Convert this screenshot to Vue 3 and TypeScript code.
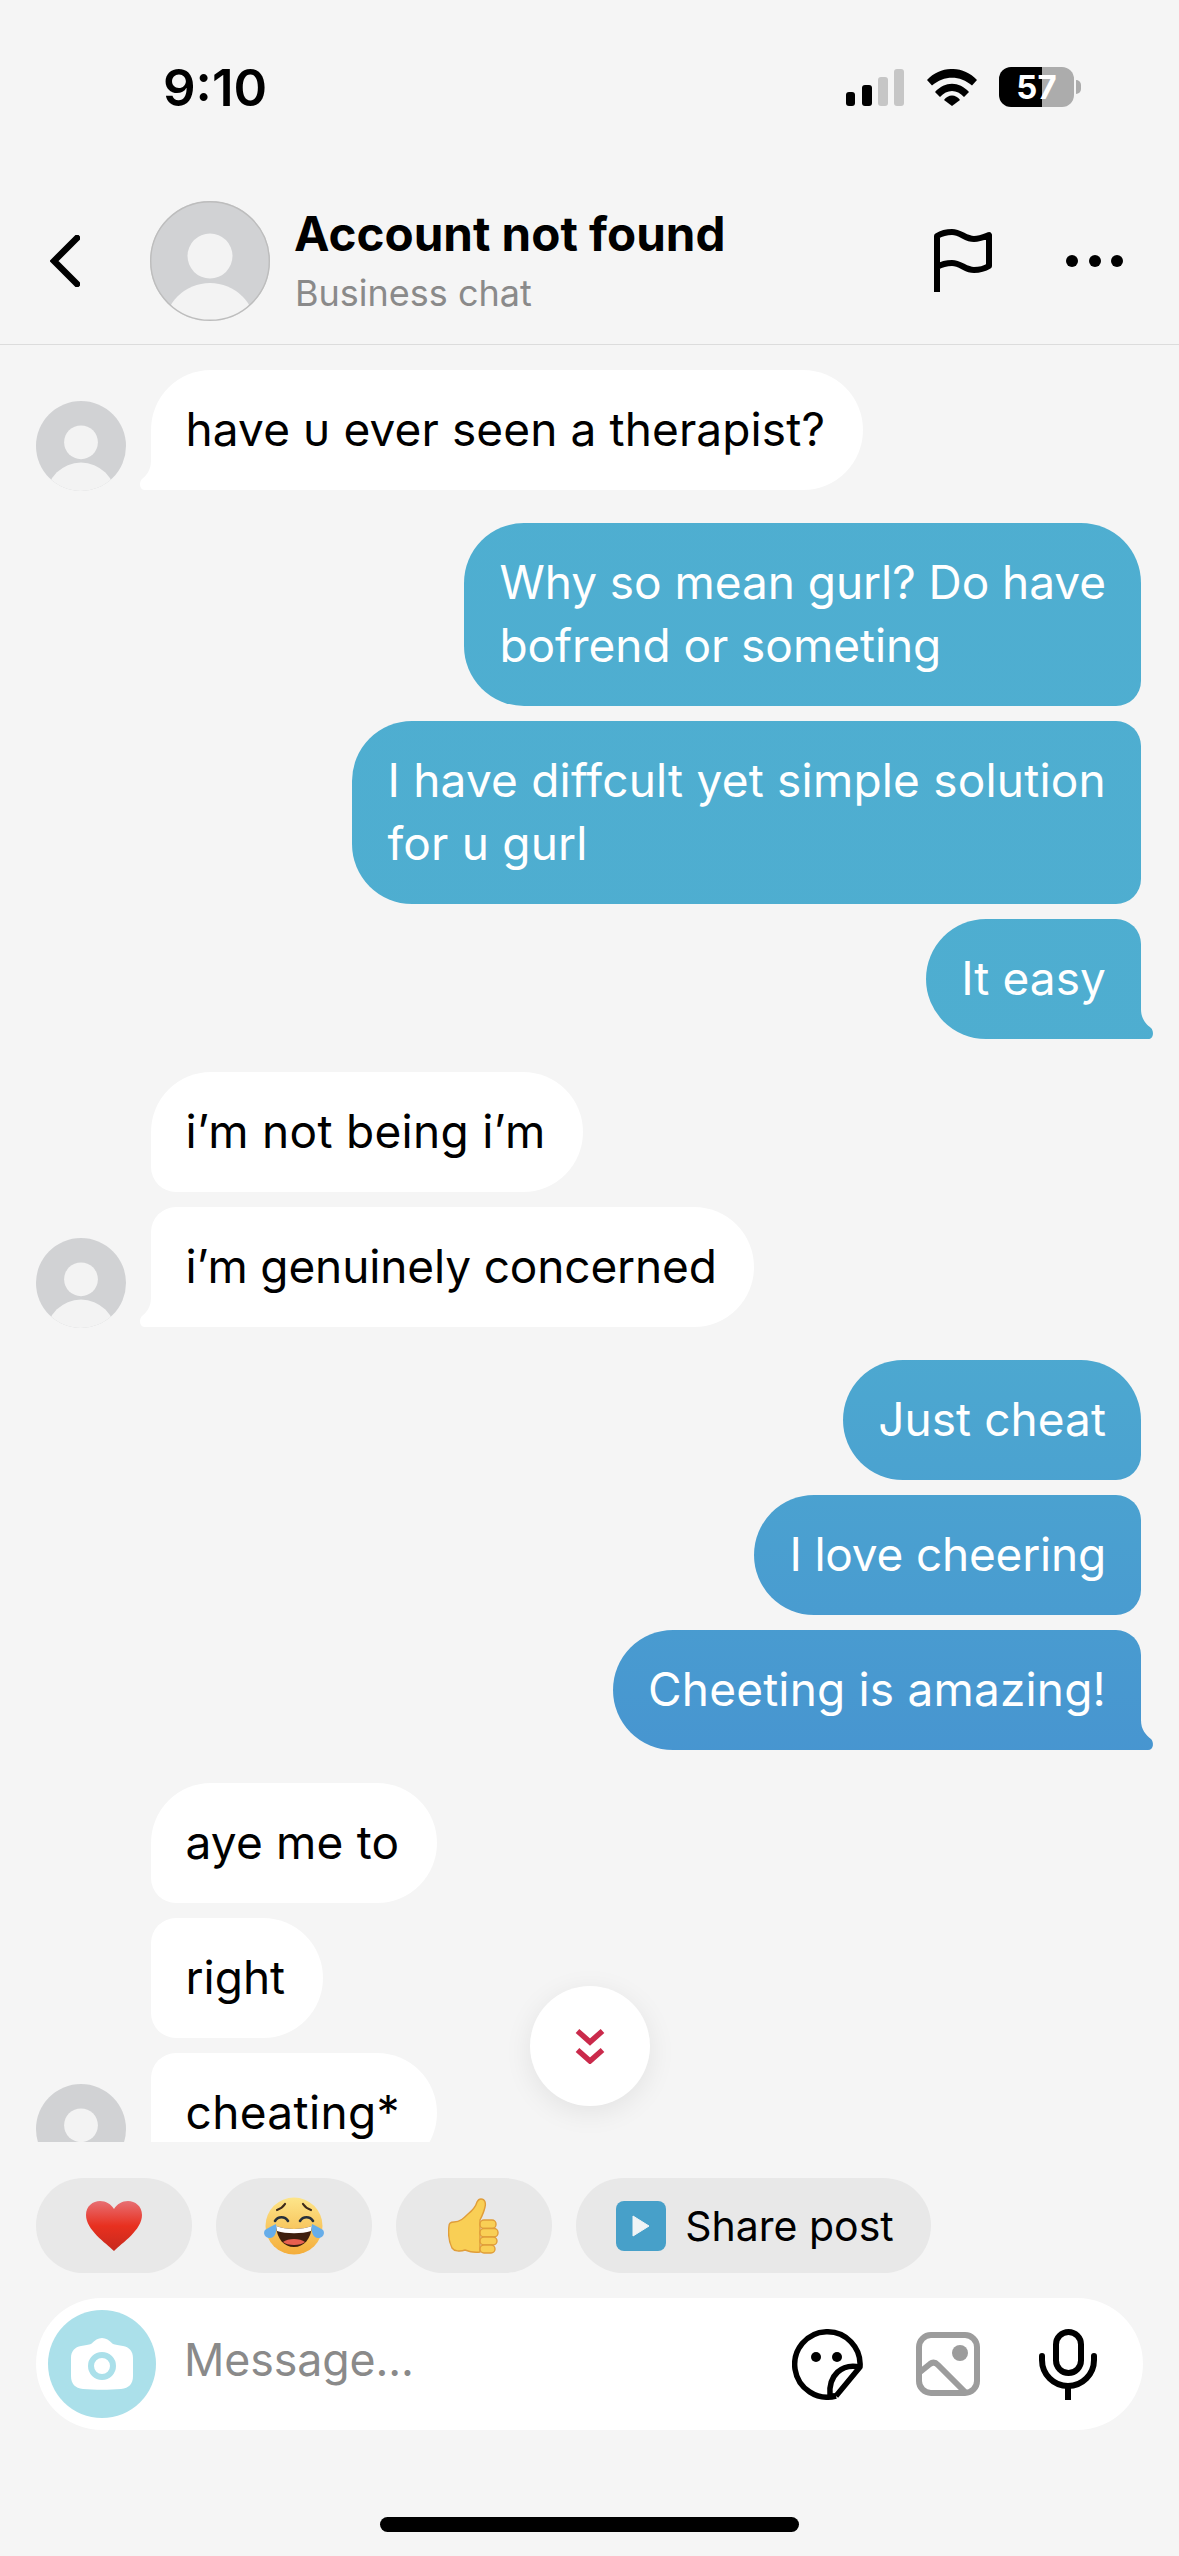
<script setup lang="ts">
interface IMessage {
  text: string;
  spacing: number;
}
interface IGroup {
  side: 'left' | 'right';
  messages: IMessage[];
}

const groups: IGroup[] = [
  { side: 'left', messages: [{ text: 'have υ ever seen a therapist?', spacing: 0.11 }] },
  {
    side: 'right',
    messages: [
      { text: 'Why so mean gurl? Do have\nbofrend or someting', spacing: -0.05 },
      { text: 'I have diffcult yet simple solution\nfor u gurl', spacing: 0.2 },
      { text: 'It easy', spacing: 0.08 },
    ],
  },
  {
    side: 'left',
    messages: [
      { text: 'i’m not being i’m', spacing: 0.29 },
      { text: 'i’m genuinely concerned', spacing: -0.14 },
    ],
  },
  {
    side: 'right',
    messages: [
      { text: 'Just cheat', spacing: 0.04 },
      { text: 'I love cheering', spacing: -0.2 },
      { text: 'Cheeting is amazing!', spacing: 0.18 },
    ],
  },
  {
    side: 'left',
    messages: [
      { text: 'aye me to', spacing: 0.18 },
      { text: 'right', spacing: 0 },
      { text: 'cheating*', spacing: 0.36 },
    ],
  },
];
</script>

<template>
  <div class="page">
    <div class="status">
      <span class="time">9:10</span>
      <div class="status-icons">
        <svg class="signal" width="58" height="37" viewBox="0 0 58 37">
          <rect x="0" y="23" width="9" height="14" rx="3" fill="#000" />
          <rect x="16" y="16" width="10" height="21" rx="3" fill="#000" />
          <rect x="32" y="8" width="10" height="29" rx="3" fill="#c6c6c6" />
          <rect x="48" y="0" width="10" height="37" rx="3" fill="#c6c6c6" />
        </svg>
        <svg class="wifi" width="50" height="37" viewBox="0 0 50 37">
          <path d="M0 11C14-3.7 36-3.7 50 11L45 16.5C33 6 17 6 5 16.5Z" fill="#000" />
          <path d="M8 23C18 12 32 12 42 23L37 28C30 20 20 20 13 28Z" fill="#000" />
          <path d="M17 31C21 25 29 25 33 31L25 37Z" fill="#000" />
        </svg>
        <div class="battery">57</div>
      </div>
    </div>

    <header class="header">
      <svg class="back" width="30" height="52" viewBox="0 0 30 52">
        <path d="M27 3L4 26L27 49" fill="none" stroke="#000" stroke-width="6.5" stroke-linecap="round" stroke-linejoin="miter" />
      </svg>
      <svg class="head-avatar" width="120" height="120" viewBox="0 0 120 120">
        <defs>
          <clipPath id="avatar-clip"><circle cx="60" cy="60" r="60" /></clipPath>
        </defs>
        <g clip-path="url(#avatar-clip)">
          <rect width="120" height="120" fill="#d1d2d4" />
          <circle cx="60" cy="55" r="22.5" fill="#f3f3f3" />
          <circle cx="60" cy="128" r="46" fill="#f3f3f3" />
        </g>
        <circle cx="60" cy="60" r="59.3" fill="none" stroke="#bdbdbd" stroke-width="1.4" />
      </svg>
      <div class="head-text">
        <div class="title">Account not found</div>
        <div class="subtitle">Business chat</div>
      </div>
      <svg class="flag" width="58" height="63" viewBox="0 0 58 63">
        <path
          d="M3 63V7C8 4 13 3 18 3C27 3 31 10 40 10C46 10 50 8 55 6V37C50 40 46 41 40 41C31 41 27 34 18 34C13 34 8 35 3 38"
          fill="none"
          stroke="#000"
          stroke-width="6"
          stroke-linejoin="round"
        />
      </svg>
      <div class="dots"><i /><i /><i /></div>
    </header>

    <main class="messages">
      <section v-for="(group, g) in groups" :key="g" class="group" :class="group.side">
        <svg v-if="group.side === 'left'" class="avatar" width="90" height="90" viewBox="0 0 120 120">
          <g clip-path="url(#avatar-clip)">
            <rect width="120" height="120" fill="#d1d2d4" />
            <circle cx="60" cy="55" r="22.5" fill="#f3f3f3" />
            <circle cx="60" cy="128" r="46" fill="#f3f3f3" />
          </g>
        </svg>
        <div class="stack">
          <div
            v-for="(message, m) in group.messages"
            :key="m"
            class="bubble"
            :class="{ first: m === 0, tail: m === group.messages.length - 1 && g !== 4 }"
            :style="{ letterSpacing: message.spacing + 'px' }"
          >{{ message.text }}</div>
        </div>
      </section>
    </main>

    <div class="jump">
      <svg width="30" height="36" viewBox="0 0 30 36">
        <path d="M2.5 3L15 14L27.5 3M2.5 22L15 33L27.5 22" fill="none" stroke="#ca2a4b" stroke-width="5.5" />
      </svg>
    </div>

    <div class="chips">
      <div class="chip emoji">
        <svg width="56" height="50" viewBox="0 0 56 50">
          <defs>
            <linearGradient id="heart-fill" x1="0" y1="0" x2="0" y2="1">
              <stop offset="0" stop-color="#e76f73" />
              <stop offset="0.5" stop-color="#e8301f" />
              <stop offset="1" stop-color="#c7291d" />
            </linearGradient>
          </defs>
          <path d="M28 50C20 42 0 29 0 14C0 5 7 0 14 0C20 0 25 3 28 8C31 3 36 0 42 0C49 0 56 5 56 14C56 29 36 42 28 50Z" fill="url(#heart-fill)" />
        </svg>
      </div>
      <div class="chip emoji">
        <svg width="60" height="58" viewBox="0 0 60 58">
          <defs>
            <linearGradient id="face-fill" x1="0" y1="0" x2="0" y2="1">
              <stop offset="0" stop-color="#fde58a" />
              <stop offset="1" stop-color="#f4ad3a" />
            </linearGradient>
          </defs>
          <circle cx="30" cy="29" r="28.5" fill="url(#face-fill)" />
          <path d="M13 13C16 12 19 10 21 7M47 13C44 12 41 10 39 7" fill="none" stroke="#3d2a1a" stroke-width="2.2" stroke-linecap="round" />
          <path d="M11 24C14 19 21 19 24 24M36 24C39 19 46 19 49 24" fill="none" stroke="#27303a" stroke-width="2.6" stroke-linecap="round" />
          <path d="M12 29C22 33 38 33 48 29C47 42 40 50 30 50C20 50 13 42 12 29Z" fill="#3e1f0e" />
          <path d="M12 29C22 33 38 33 48 29L47 34C38 37 22 37 13 34Z" fill="#fff" />
          <path d="M19 45C24 41 36 41 41 45C37 49 23 49 19 45Z" fill="#e8604f" />
          <path d="M12 27C13 33 12 41 6 41C0 41-1 35 1 33C4 31 8 29 12 27Z" fill="#66ade9" />
          <path d="M48 27C47 33 48 41 54 41C60 41 61 35 59 33C56 31 52 29 48 27Z" fill="#66ade9" />
        </svg>
      </div>
      <div class="chip emoji">
        <svg width="52" height="56" viewBox="0 0 52 56">
          <path
            d="M33 1C37 1 38 5 37 9C36 14 34 18 32 22V54C26 55 22 54 17 52C12 54 6 53 4 50C1 44 0 36 1 28C1 25 3 24 6 24C12 24 16 20 20 16C25 12 28 8 29 4C30 2 31 1 33 1Z"
            fill="#f9cf55"
            stroke="#e09d39"
            stroke-width="1.4"
          />
          <g fill="#f9cf55" stroke="#e09d39" stroke-width="1.4">
            <rect x="32" y="22" width="16" height="8.5" rx="4" />
            <rect x="32" y="30.5" width="18" height="8.5" rx="4" />
            <rect x="32" y="39" width="17" height="8" rx="4" />
            <rect x="32" y="47" width="15" height="8" rx="4" />
          </g>
        </svg>
      </div>
      <div class="chip share">
        <div class="play">
          <svg width="18" height="22" viewBox="0 0 18 22"><path d="M1 1L17 11L1 21Z" fill="#f0f4f6" stroke="#f0f4f6" stroke-width="1" stroke-linejoin="round" /></svg>
        </div>
        <span>Share post</span>
      </div>
    </div>

    <div class="composer">
      <div class="camera">
        <svg width="62" height="52" viewBox="0 0 62 52">
          <path d="M20 6C24 2 27 0 31 0C35 0 38 2 42 6C44 7 48 7 52 8C58 9 62 13 62 20V38C62 46 58 50 50 51C38 52 24 52 12 51C4 50 0 46 0 38V20C0 13 4 9 10 8C14 7 18 7 20 6Z" fill="#fff" />
          <circle cx="31" cy="28" r="11" fill="none" stroke="#abe0ea" stroke-width="6" />
        </svg>
      </div>
      <span class="placeholder">Message...</span>
      <svg class="sticker" width="71" height="71" viewBox="0 0 71 71">
        <path d="M44 67A32.7 32.7 0 1 1 68 38L44 67" fill="none" stroke="#000" stroke-width="5.5" stroke-linejoin="round" />
        <path d="M68 38C50 34 36 46 38 67L44 67" fill="none" stroke="#000" stroke-width="5.5" stroke-linejoin="round" />
        <circle cx="24" cy="28" r="5" />
        <circle cx="45" cy="28" r="5" />
      </svg>
      <svg class="picture" width="64" height="64" viewBox="0 0 64 64">
        <rect x="3" y="3" width="58" height="58" rx="12" fill="none" stroke="#9c9c9c" stroke-width="6" />
        <circle cx="44" cy="21" r="8" fill="#9c9c9c" />
        <path d="M4 40L14 32Q18 29 22 33L50 61" fill="none" stroke="#9c9c9c" stroke-width="6" />
      </svg>
      <svg class="mic" width="58" height="71" viewBox="0 0 58 71">
        <rect x="17" y="3" width="25" height="41" rx="12.5" fill="none" stroke="#000" stroke-width="6" />
        <path d="M3 27V31A26 26 0 0 0 55 31V27" fill="none" stroke="#000" stroke-width="6" stroke-linecap="round" />
        <path d="M29 58V71" stroke="#000" stroke-width="6" />
      </svg>
    </div>

    <div class="home-bar" />
  </div>
</template>

<style>
html,
body {
  margin: 0;
  background: #f5f5f5;
}
</style>

<style scoped>
.page {
  position: relative;
  display: flex;
  flex-direction: column;
  width: 1179px;
  height: 2556px;
  overflow: hidden;
  background: #f5f5f5;
  color: #000;
  font-family: Inter, 'Liberation Sans', sans-serif;
}

.status {
  display: flex;
  align-items: center;
  justify-content: space-between;
  flex: none;
  height: 174px;
  padding: 0 98px 0 163px;
  box-sizing: border-box;
}
.time {
  font-size: 51px;
  font-weight: 600;
}
.status-icons {
  display: flex;
  align-items: center;
  gap: 22px;
}
.wifi {
  margin-left: 1px;
}
.battery {
  position: relative;
  display: flex;
  align-items: center;
  justify-content: center;
  width: 75px;
  height: 40px;
  margin-right: 7px;
  border-radius: 12px;
  background: linear-gradient(90deg, #000 57%, #acacac 57%);
  color: #fff;
  font-size: 33px;
  font-weight: 700;
}
.battery::after {
  content: '';
  position: absolute;
  top: 13px;
  right: -7px;
  width: 5px;
  height: 14px;
  border-radius: 0 7px 7px 0;
  background: #acacac;
}

.header {
  display: flex;
  align-items: center;
  flex: none;
  height: 171px;
  padding: 27px 56px 24px 50px;
  box-sizing: border-box;
  border-bottom: 1.5px solid #dcdcdc;
}
.back {
  margin-right: 70px;
}
.head-text {
  flex: 1;
  margin-left: 25px;
}
.title {
  margin-left: -1px;
  font-size: 47.6px;
  font-weight: 700;
  line-height: 60px;
}
.subtitle {
  margin-top: 4px;
  color: #8a8a8a;
  font-size: 36px;
  line-height: 50px;
}
.dots {
  display: flex;
  gap: 10.5px;
  margin-left: 74px;
}
.dots i {
  width: 12px;
  height: 12px;
  border-radius: 50%;
  background: #000;
}

.messages {
  display: flex;
  flex-direction: column;
  flex: 1;
  min-height: 0;
  gap: 33px;
  padding-top: 25px;
  box-sizing: border-box;
  overflow: hidden;
}
.group {
  display: flex;
  flex: none;
}
.group.left {
  align-items: flex-end;
  padding-left: 36px;
}
.group.right {
  justify-content: flex-end;
  padding-right: 38px;
}
.avatar {
  flex: none;
  margin: 0 25px -1px 0;
}
.stack {
  display: flex;
  flex-direction: column;
  gap: 15px;
}
.left .stack {
  align-items: flex-start;
}
.right .stack {
  align-items: flex-end;
}

.bubble {
  position: relative;
  padding: 27.5px 35px 29.5px;
  font-size: 46px;
  line-height: 63px;
  white-space: pre;
}
.left .bubble {
  padding-left: 34.5px;
  padding-right: 37.5px;
  border-radius: 25px 60px 60px 25px;
  background: #fff;
  color: #000;
}
.left .bubble.first {
  border-top-left-radius: 60px;
}
.right .bubble {
  border-radius: 60px 25px 25px 60px;
  background: linear-gradient(180deg, #4fafd1 0, #4eadd0 1250px, #4795d0 1760px) fixed;
  color: #fff;
}
.right .bubble.first {
  border-top-right-radius: 60px;
}
.bubble.tail::after {
  content: '';
  position: absolute;
  bottom: 0;
  width: 16px;
  height: 30px;
  background: inherit;
}
.left .bubble.tail {
  border-bottom-left-radius: 0;
}
.left .bubble.tail::after {
  left: -12px;
  clip-path: path('M12 0C12 10 8 15 3 19C0 22 0 30 6 30L16 30L16 0Z');
}
.right .bubble.tail {
  border-bottom-right-radius: 0;
}
.right .bubble.tail::after {
  right: -13px;
  clip-path: path('M3 0C3 10 8 15 13 19C16 22 16 30 10 30L0 30L0 0Z');
}

.jump {
  position: absolute;
  top: 1986px;
  left: 530px;
  display: flex;
  align-items: center;
  justify-content: center;
  width: 120px;
  height: 120px;
  border-radius: 50%;
  background: #fff;
  box-shadow: 0 6px 28px rgba(0, 0, 0, 0.08);
}

.chips {
  display: flex;
  flex: none;
  gap: 24px;
  padding: 36px 0 25px 36px;
}
.chip {
  display: flex;
  align-items: center;
  justify-content: center;
  height: 95px;
  border-radius: 48px;
  background: #e8e8e8;
}
.chip.emoji {
  width: 156px;
}
.chip.share {
  gap: 19px;
  width: 355px;
  padding-left: 3px;
  box-sizing: border-box;
  font-size: 41px;
}
.play {
  display: flex;
  align-items: center;
  justify-content: center;
  width: 50px;
  height: 50px;
  border-radius: 8px;
  background: #47a0c9;
}

.composer {
  display: flex;
  align-items: center;
  flex: none;
  height: 132px;
  margin: 0 36px;
  padding: 0 46px 0 12px;
  border-radius: 66px;
  background: #fff;
}
.camera {
  display: flex;
  align-items: center;
  justify-content: center;
  flex: none;
  width: 108px;
  height: 108px;
  border-radius: 50%;
  background: #abe0ea;
}
.placeholder {
  flex: 1;
  margin: 0 0 8px 28px;
  color: #8a8a8a;
  font-size: 44.7px;
  letter-spacing: -0.1px;
}
.picture {
  margin-left: 53px;
}
.mic {
  margin-left: 59px;
}

.home-bar {
  flex: none;
  width: 419px;
  height: 15px;
  margin: 87px auto 24px;
  border-radius: 8px;
  background: #000;
}
</style>
